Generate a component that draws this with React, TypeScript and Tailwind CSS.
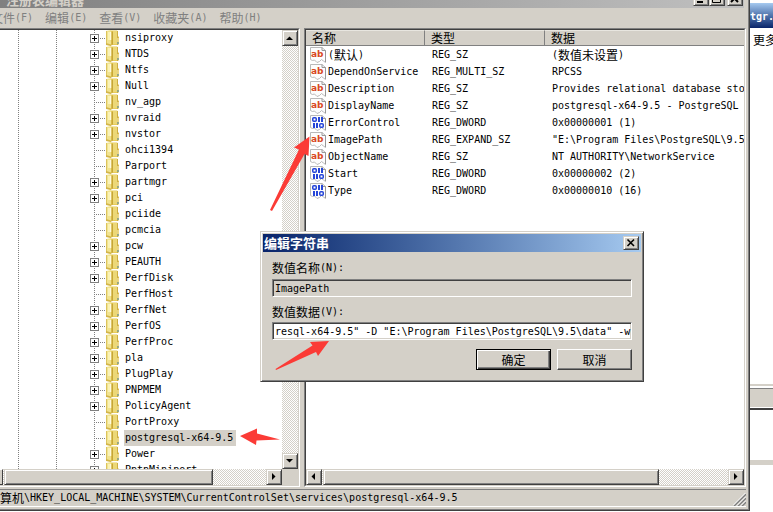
import React from "react";

const LATIN = "font-['DejaVu_Sans_Mono','Noto_Sans_CJK_SC',monospace] text-[10px]";
const HAN = "font-['Noto_Sans_CJK_SC',sans-serif] text-[12px]";
const RAISED =
  "bg-[#d4d0c8] border border-t-[#d4d0c8] border-l-[#d4d0c8] border-r-[#404040] border-b-[#404040] shadow-[inset_1px_1px_0_#fff,inset_-1px_-1px_0_#808080]";
const TRACK =
  "bg-[conic-gradient(#fff_25%,#d4d0c8_0_50%,#fff_0_75%,#d4d0c8_0)] bg-[length:2px_2px]";
const DOTTED =
  "w-px self-stretch bg-[linear-gradient(#808080_50%,transparent_50%)] bg-[length:1px_2px]";
const SUNKEN_OUTER = "border-t border-b border-r border-t-[#808080] border-b-white border-r-white";
const SUNKEN_INNER = "border-t border-b border-r border-t-[#404040] border-b-[#d4d0c8] border-r-[#d4d0c8]";

function Han({ children }: { children: React.ReactNode }) {
  return <span className={HAN}>{children}</span>;
}

function Bracketed({ text }: { text: string }) {
  return (
    <span className="flex h-[17px] items-center">
      (<Han>{text}</Han>)
    </span>
  );
}

type Key = { name: string; open?: boolean; selected?: boolean };

const keys: Key[] = [
  { name: "nsiproxy", open: true },
  { name: "NTDS", open: true },
  { name: "Ntfs", open: true },
  { name: "Null", open: true },
  { name: "nv_agp" },
  { name: "nvraid", open: true },
  { name: "nvstor", open: true },
  { name: "ohci1394" },
  { name: "Parport" },
  { name: "partmgr", open: true },
  { name: "pci", open: true },
  { name: "pciide" },
  { name: "pcmcia" },
  { name: "pcw", open: true },
  { name: "PEAUTH", open: true },
  { name: "PerfDisk", open: true },
  { name: "PerfHost" },
  { name: "PerfNet", open: true },
  { name: "PerfOS", open: true },
  { name: "PerfProc", open: true },
  { name: "pla", open: true },
  { name: "PlugPlay", open: true },
  { name: "PNPMEM", open: true },
  { name: "PolicyAgent", open: true },
  { name: "PortProxy" },
  { name: "postgresql-x64-9.5", selected: true },
  { name: "Power", open: true },
  { name: "PptpMiniport", open: true },
];

type Value = { name: string; unset?: boolean; kind: "ab" | "bin"; type: string; data: string };

const values: Value[] = [
  { name: "默认", unset: true, kind: "ab", type: "REG_SZ", data: "数值未设置" },
  { name: "DependOnService", kind: "ab", type: "REG_MULTI_SZ", data: "RPCSS" },
  { name: "Description", kind: "ab", type: "REG_SZ", data: "Provides relational database sto" },
  { name: "DisplayName", kind: "ab", type: "REG_SZ", data: "postgresql-x64-9.5 - PostgreSQL " },
  { name: "ErrorControl", kind: "bin", type: "REG_DWORD", data: "0x00000001 (1)" },
  { name: "ImagePath", kind: "ab", type: "REG_EXPAND_SZ", data: '"E:\\Program Files\\PostgreSQL\\9.5' },
  { name: "ObjectName", kind: "ab", type: "REG_SZ", data: "NT AUTHORITY\\NetworkService" },
  { name: "Start", kind: "bin", type: "REG_DWORD", data: "0x00000002 (2)" },
  { name: "Type", kind: "bin", type: "REG_DWORD", data: "0x00000010 (16)" },
];

const menus = [
  { label: "文件", key: "F" },
  { label: "编辑", key: "E" },
  { label: "查看", key: "V" },
  { label: "收藏夹", key: "A" },
  { label: "帮助", key: "H" },
];

function Branch({ open }: { open?: boolean }) {
  return (
    <svg width="16" height="16" viewBox="0 0 16 16" shapeRendering="crispEdges" aria-hidden="true">
      <path d="M4.5 0V16" stroke="#808080" strokeDasharray="1 1" />
      <path d="M4 8.5H16" stroke="#808080" strokeDasharray="1 1" />
      {open && (
        <>
          <rect x="0.5" y="4.5" width="8" height="8" fill="#fff" stroke="#808080" />
          <path d="M2 8.5H7M4.5 6V11" stroke="#000" />
        </>
      )}
    </svg>
  );
}

function Folder() {
  return (
    <svg width="14" height="16" viewBox="0 0 14 16" className="shrink-0" aria-hidden="true">
      <path d="M5 0.5H11L12 1.5V6L13 7V14L12 15H5Z" fill="#e6cc5c" />
      <path d="M7 1H11.5V14H7Z" fill="#ecd877" />
      <path d="M11 1H12V15H11Z" fill="#cdad42" />
      <path d="M12 7H13V14H12Z" fill="#d8b94d" />
      <path d="M11.5 8H12.5V12H11.5Z" fill="#fff6c4" />
      <path d="M11.5 12H12.5V14H11.5Z" fill="#5b9fc4" />
      <path d="M0 1L5 0V16L0 14.5Z" fill="#f1e38f" />
      <path d="M0 1H1V14.5H0Z" fill="#dcc45d" />
      <path d="M2 2H4V10H2Z" fill="#faf2b6" />
      <path d="M4 2H5.5V10H4Z" fill="#fffbe0" />
      <path d="M5.5 2L7 1.5V14L5.5 16Z" fill="#c7a636" />
      <path d="M0 13L5 14.5V16L0 15Z" fill="#d3b548" />
    </svg>
  );
}

function ValueIcon({ kind }: { kind: "ab" | "bin" }) {
  return (
    <svg width="16" height="16" viewBox="0 0 16 16" className="shrink-0" aria-hidden="true">
      <path
        d="M0.5 0.5H12L15.5 3.5V15.5L13.5 14L11.5 12.5L9.5 14.5L7 15.5L4.5 13L2.5 13.5L0.5 12.5Z"
        fill="#fdfdfd"
        stroke="#b9b9b9"
      />
      <path d="M12 0.5V3.5H15.5V15" fill="none" stroke="#989898" />
      {kind === "ab" ? (
        <text x="1" y="10" fontSize="9" fontWeight="700" fontFamily="'DejaVu Sans', sans-serif" fill="#d9481f">
          ab
        </text>
      ) : (
        <g fill="#2545d8" stroke="none">
          <rect x="2.75" y="2.75" width="3.5" height="3.5" rx="1" fill="none" stroke="#2545d8" strokeWidth="1.5" />
          <rect x="8" y="2" width="2" height="5" />
          <rect x="11" y="2" width="2" height="5" />
          <rect x="3" y="8" width="2" height="5" />
          <rect x="6" y="8" width="2" height="5" />
          <rect x="9.75" y="8.75" width="3.5" height="3.5" rx="1" fill="none" stroke="#2545d8" strokeWidth="1.5" />
        </g>
      )}
    </svg>
  );
}

const ARROWS = {
  up: "M3 9H10L6.5 5.5Z",
  down: "M3 5H10L6.5 8.5Z",
  left: "M8 3V10L4.5 6.5Z",
  right: "M5 3V10L8.5 6.5Z",
};

function ScrollButton({ dir, label }: { dir: keyof typeof ARROWS; label: string }) {
  return (
    <button type="button" aria-label={label} className={`size-4 shrink-0 ${RAISED}`}>
      <svg width="14" height="14" viewBox="0 0 14 14" aria-hidden="true">
        <path d={ARROWS[dir]} fill="#000" />
      </svg>
    </button>
  );
}

function KeyTree() {
  return (
    <section className={`flex w-[300px] shrink-0 ${SUNKEN_OUTER}`}>
      <div className={`flex min-w-0 flex-1 flex-col ${SUNKEN_INNER}`}>
        <div className="flex min-h-0 flex-1">
          <ul className="min-w-0 flex-1 overflow-hidden bg-white">
            {keys.map((k) => (
              <li key={k.name} className="flex h-4 items-center pl-[18px]">
                <span className={DOTTED} />
                <span className={`ml-[37px] ${DOTTED}`} />
                {k.open ? (
                  <button type="button" aria-label={`展开 ${k.name}`} className="ml-[33px] size-4">
                    <Branch open />
                  </button>
                ) : (
                  <span className="ml-[33px] size-4">
                    <Branch />
                  </span>
                )}
                <Folder />
                <span
                  className={`ml-1 pr-[3px] pl-px leading-4 whitespace-nowrap ${LATIN} ${k.selected ? "bg-[#d4d0c8]" : ""}`}
                >
                  {k.name}
                </span>
              </li>
            ))}
          </ul>
          <div className={`flex w-4 flex-col justify-between ${TRACK}`}>
            <ScrollButton dir="up" label="向上滚动" />
            <ScrollButton dir="down" label="向下滚动" />
          </div>
        </div>
        <div className="flex h-4">
          <div className="w-[3px] border-y border-r border-t-white border-r-[#404040] border-b-[#404040] bg-[#d4d0c8]" />
          <div className={`flex flex-1 justify-between ${TRACK}`}>
            <div className={`ml-px w-[209px] ${RAISED}`} />
            <ScrollButton dir="right" label="向右滚动" />
          </div>
          <div className="w-4 bg-[#d4d0c8]" />
        </div>
      </div>
    </section>
  );
}

function HeaderCell({ children, last }: { children: string; last?: boolean }) {
  return (
    <th
      scope="col"
      className={`h-4 border-t border-b border-t-[#e8e6e0] border-b-[#808080] bg-[#d4d0c8] p-0 pl-[6px] text-left font-normal ${HAN} ${
        last ? "" : "border-r border-r-[#808080]"
      }`}
    >
      <div className="h-[14px] leading-[14px]">{children}</div>
    </th>
  );
}

function ValueList() {
  return (
    <section className={`flex min-w-0 flex-1 border-l border-l-[#808080] ${SUNKEN_OUTER}`}>
      <div className={`flex min-w-0 flex-1 flex-col border-l border-l-[#404040] ${SUNKEN_INNER}`}>
        <div className="min-h-0 flex-1 overflow-hidden bg-white">
          <table className="w-full table-fixed border-separate border-spacing-0">
            <colgroup>
              <col className="w-[119px]" />
              <col className="w-[120px]" />
              <col />
            </colgroup>
            <thead>
              <tr>
                <HeaderCell>名称</HeaderCell>
                <HeaderCell>类型</HeaderCell>
                <HeaderCell last>数据</HeaderCell>
              </tr>
            </thead>
            <tbody>
              {values.map((v) => (
                <tr key={v.name} className={`leading-[17px] whitespace-nowrap ${LATIN}`}>
                  <td className="h-[17px] p-0 pl-1">
                    <div className="flex h-[17px] items-center gap-[2px]">
                      <ValueIcon kind={v.kind} />
                      {v.unset ? <Bracketed text={v.name} /> : <span>{v.name}</span>}
                    </div>
                  </td>
                  <td className="p-0 pl-[7px]">
                    <div className="h-[17px]">{v.type}</div>
                  </td>
                  <td className="overflow-hidden p-0 pl-[7px]">
                    <div className="h-[17px]">{v.unset ? <Bracketed text={v.data} /> : v.data}</div>
                  </td>
                </tr>
              ))}
            </tbody>
          </table>
        </div>
        <div className={`flex h-4 ${TRACK}`}>
          <ScrollButton dir="left" label="向左滚动" />
          <div className={`ml-px w-[336px] ${RAISED}`} />
          <span className="flex-1" />
          <ScrollButton dir="right" label="向右滚动" />
        </div>
      </div>
    </section>
  );
}

function TitleBar() {
  const box = `flex h-[14px] w-4 items-end justify-center ${RAISED}`;
  return (
    <header className="mr-1 flex h-2 items-end justify-between overflow-hidden bg-linear-to-r from-[#808080] to-[#c0c0c0] pr-px pl-[6px]">
      <h1 className="text-[13px] leading-4 font-bold text-[#d4d0c8] font-['Noto_Sans_CJK_SC',sans-serif]">
        注册表编辑器
      </h1>
      <div className="flex pb-[2px]">
        <button type="button" aria-label="最小化" className={box}>
          <svg width="14" height="12" viewBox="0 0 14 12" aria-hidden="true">
            <path d="M3 8H9V10H3Z" />
          </svg>
        </button>
        <button type="button" aria-label="最大化" className={box}>
          <svg width="14" height="12" viewBox="0 0 14 12" aria-hidden="true">
            <path d="M2.5 1.5H10.5V9.5H2.5Z" fill="none" stroke="#000" />
          </svg>
        </button>
        <button type="button" aria-label="关闭" className={`ml-[2px] ${box}`}>
          <svg width="14" height="12" viewBox="0 0 14 12" aria-hidden="true">
            <path d="M3 2L10 9M10 2L3 9" stroke="#000" strokeWidth="2" />
          </svg>
        </button>
      </div>
    </header>
  );
}

function EditDialog() {
  return (
    <div
      role="dialog"
      aria-label="编辑字符串"
      className={`absolute top-[231px] left-[260px] w-[384px] p-[2px] pb-[11px] ${RAISED}`}
    >
      <div className="flex h-[18px] items-center justify-between bg-linear-to-r from-[#0a246a] to-[#a6caf0] pr-[2px] pl-px">
        <h2 className="text-[13px] leading-4 font-bold text-white font-['Noto_Sans_CJK_SC',sans-serif]">编辑字符串</h2>
        <button type="button" aria-label="关闭" className={`h-[14px] w-4 ${RAISED}`}>
          <svg width="14" height="12" viewBox="0 0 14 12" aria-hidden="true">
            <path d="M3.5 2.5L10 9M10 2.5L3.5 9" stroke="#000" strokeWidth="1.6" />
          </svg>
        </button>
      </div>
      <form className={`px-[9px] pt-2 ${LATIN}`} onSubmit={(e) => e.preventDefault()}>
        <label htmlFor="value-name" className="flex h-4 items-center leading-4">
          <Han>数值名称</Han>(N):
        </label>
        <input
          id="value-name"
          readOnly
          defaultValue="ImagePath"
          className="mt-[3px] block h-[18px] w-full border border-t-[#808080] border-r-white border-b-white border-l-[#808080] bg-[#d4d0c8] px-[2px] leading-4 shadow-[inset_1px_1px_0_#404040]"
        />
        <label htmlFor="value-data" className="mt-[7px] flex h-4 items-center leading-4">
          <Han>数值数据</Han>(V):
        </label>
        <input
          id="value-data"
          defaultValue={'resql-x64-9.5" -D "E:\\Program Files\\PostgreSQL\\9.5\\data" -w'}
          className="mt-[2px] block h-[18px] w-full border border-t-[#808080] border-r-white border-b-white border-l-[#808080] bg-white pl-[2px] leading-4 shadow-[inset_1px_1px_0_#404040,inset_-1px_-1px_0_#d4d0c8]"
        />
        <div className={`mt-[9px] flex justify-end gap-[6px] ${HAN}`}>
          <button
            type="submit"
            className="h-[21px] w-[75px] border border-black bg-[#d4d0c8] leading-4 shadow-[inset_1px_1px_0_#fff,inset_-1px_-1px_0_#404040,inset_-2px_-2px_0_#808080]"
          >
            确定
          </button>
          <button
            type="button"
            className="h-[21px] w-[75px] border border-t-white border-r-[#404040] border-b-[#404040] border-l-white bg-[#d4d0c8] leading-4 shadow-[inset_-1px_-1px_0_#808080]"
          >
            取消
          </button>
        </div>
      </form>
    </div>
  );
}

function BackWindow() {
  return (
    <aside className="flex w-[23px] shrink-0 flex-col overflow-hidden bg-white pt-[3px] whitespace-nowrap">
      <div className="h-[25px] bg-linear-to-b from-[#a6caf0] to-[#0a246a] text-[10px] leading-[27px] font-bold text-white font-['DejaVu_Sans_Mono',monospace]">
        tgr.
      </div>
      <div className={`h-[356px] pt-1 pl-[3px] leading-4 ${HAN}`}>更多</div>
      <div className="h-[26px] border-t-2 border-b-2 border-t-[#d4d0c8] border-b-[#404040] pt-[2px]">
        <div className="h-5 border-t border-b border-t-[#808080] border-b-white bg-[#d4d0c8]" />
      </div>
      <div className="mt-[50px] h-[5px] bg-[#d4d0c8]" />
    </aside>
  );
}

export default function App() {
  return (
    <div className="relative flex h-screen overflow-hidden bg-white text-black">
      <main className="mb-px flex min-w-0 flex-1 flex-col border-r border-b border-[#404040] bg-[#d4d0c8]">
        <div className="flex min-h-0 flex-1 flex-col border-r border-b border-[#808080]">
          <TitleBar />
          <nav className={`-ml-[9px] flex h-5 items-center gap-3 leading-4 text-[#808080] ${LATIN}`}>
            {menus.map((m) => (
              <button key={m.key} type="button" className="flex items-center whitespace-nowrap">
                <Han>{m.label}</Han>({m.key})
              </button>
            ))}
          </nav>
          <div className="mr-[2px] flex min-h-0 flex-1 gap-1">
            <KeyTree />
            <ValueList />
          </div>
          <footer
            className={`mt-[2px] mr-[2px] mb-[2px] flex h-[18px] items-center justify-between border-t border-b border-t-[#808080] border-b-white leading-4 whitespace-nowrap ${LATIN}`}
          >
            <span className="flex items-center">
              <Han>算机</Han>\HKEY_LOCAL_MACHINE\SYSTEM\CurrentControlSet\services\postgresql-x64-9.5
            </span>
            <svg width="13" height="13" viewBox="0 0 13 13" className="self-end" aria-hidden="true">
              <path d="M1 13L13 1M5 13L13 5M9 13L13 9" stroke="#808080" strokeWidth="1.6" />
              <path d="M0 12.5L12.5 0M4 12.5L13 3.5M8 12.5L13 7.5" stroke="#fff" />
            </svg>
          </footer>
        </div>
      </main>
      <BackWindow />
      <EditDialog />
      <svg
        width="400"
        height="460"
        viewBox="0 0 400 460"
        fill="#fb3b36"
        className="pointer-events-none absolute top-0 left-0"
        aria-hidden="true"
      >
        <path d="M309.5 136.5L294 147.5L299 149.5L270 210L272 211L304.5 154L308.5 156Z" />
        <path d="M329 341L310 342L312.5 345.5L275.5 369L276 370L316 352L318 356Z" />
        <path d="M240 436L257 428.5L257 433.5L280 439.5L256.5 440.5L256 445Z" />
      </svg>
    </div>
  );
}
